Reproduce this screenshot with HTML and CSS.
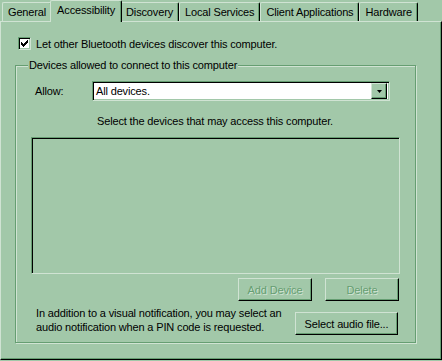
FILE: index.html
```html
<!DOCTYPE html>
<html lang="en">
<head>
  <meta charset="UTF-8" />
  <title>Bluetooth Settings</title>
  <link rel="stylesheet" href="styles.css">
</head>
<body>
  <div class="tabs">
    <div class="tab">General</div>
    <div class="tab active">Accessibility</div>
    <div class="tab">Discovery</div>
    <div class="tab">Local Services</div>
    <div class="tab">Client Applications</div>
    <div class="tab">Hardware</div>
  </div>

  <div class="panel">
    <label class="check-row">
      <span class="checkbox">
        <svg width="7" height="7" viewBox="0 0 7 7"><path d="M0 2h1v1h1v1h1v-1h1v-1h1v-1h1v-1h1v3h-1v1h-1v1h-1v1h-1v1h-1v-1h-1v-1h-1v-1h-1z" fill="#000"/></svg>
      </span>
      Let other Bluetooth devices discover this computer.
    </label>

    <fieldset class="group">
      <legend>Devices allowed to connect to this computer</legend>

      <div class="allow-row">
        <span class="allow-label">Allow:</span>
        <div class="combo">
          <span class="combo-value">All devices.</span>
          <span class="combo-btn">
            <svg width="5" height="3" viewBox="0 0 5 3"><path d="M0 0h5l-2.5 3z" fill="#000"/></svg>
          </span>
        </div>
      </div>

      <p class="hint">Select the devices that may access this computer.</p>

      <div class="device-list"></div>

      <div class="list-actions">
        <button class="btn" disabled>Add Device</button>
        <button class="btn" disabled>Delete</button>
      </div>

      <div class="audio-row">
        <p class="audio-text">In addition to a visual notification, you may select an<br>audio notification when a PIN code is requested.</p>
        <button class="btn btn-audio">Select audio file...</button>
      </div>
    </fieldset>
  </div>
</body>
</html>
```

FILE: styles.css
```css
* { box-sizing: border-box; }

body {
  margin: 0;
  width: 442px;
  height: 361px;
  overflow: hidden;
  background: #a2c8a9;
  color: #000;
  font-family: 'Liberation Sans', Arial, sans-serif;
  font-size: 11px;
  letter-spacing: -0.15px;
}

/* Tab strip */
.tabs {
  display: flex;
  align-items: flex-end;
  height: 21px;
  padding-left: 2px;
}

.tab {
  height: 19px;
  line-height: 18px;
  padding: 0 5px;
  background: #a2c8a9;
  border-top: 1px solid #d0e3d3;
  border-left: 1px solid #d0e3d3;
  border-right: 1px solid #000;
  border-radius: 2px 2px 0 0;
  box-shadow: inset -1px 0 0 #669e72;
  white-space: nowrap;
}

.tab.active {
  position: relative;
  z-index: 1;
  height: 22px;
  line-height: 18px;
  margin: 0 -2px -1px -2px;
  padding: 0 6px;
}

/* Page panel */
.panel {
  height: 339px;
  padding-top: 15px;
  border: 1px solid;
  border-color: #d0e3d3 #000 #000 #d0e3d3;
  box-shadow: inset -1px -1px 0 #669e72;
}

.check-row {
  display: flex;
  align-items: center;
  gap: 5px;
  height: 13px;
  margin-left: 17px;
}

.checkbox {
  display: flex;
  align-items: center;
  justify-content: center;
  width: 13px;
  height: 13px;
  background: #fff;
  border: 1px solid;
  border-color: #669e72 #d0e3d3 #d0e3d3 #669e72;
  box-shadow: inset 1px 1px 0 #000, inset -1px -1px 0 #a2c8a9;
}

/* Group box */
.group {
  min-width: 0;
  margin: 9px 25px 0 14px;
  padding: 0 0 7px;
  border: 1px solid #669e72;
  box-shadow: inset 1px 1px 0 #d0e3d3, 1px 1px 0 #d0e3d3;
}

.group legend {
  margin-left: 12px;
  padding: 0 1px;
  line-height: 13px;
  background: #a2c8a9;
}

.allow-row {
  display: flex;
  align-items: center;
  margin: 9px 0 0 19px;
}

.allow-label { width: 57px; }

.combo {
  display: flex;
  align-items: center;
  width: 298px;
  height: 20px;
  padding: 2px;
  background: #fff;
  border: 1px solid;
  border-color: #669e72 #d0e3d3 #d0e3d3 #669e72;
  box-shadow: inset 1px 1px 0 #000, inset -1px -1px 0 #a2c8a9;
}

.combo-value {
  flex: 1;
  padding-left: 1px;
}

.combo-btn {
  display: flex;
  align-items: center;
  justify-content: center;
  width: 16px;
  height: 16px;
  background: #a2c8a9;
  border: 1px solid;
  border-color: #d0e3d3 #000 #000 #d0e3d3;
  box-shadow: inset -1px -1px 0 #669e72;
}

.hint {
  margin: 14px 0 0 81px;
  line-height: 13px;
}

.device-list {
  width: 369px;
  height: 137px;
  margin: 9px 0 0 15px;
  border: 1px solid;
  border-color: #669e72 #d0e3d3 #d0e3d3 #669e72;
  box-shadow: inset 1px 1px 0 #000, inset -1px -1px 0 #a2c8a9;
}

.list-actions {
  display: flex;
  justify-content: flex-end;
  gap: 13px;
  width: 368px;
  margin: 4px 0 0 15px;
}

.btn {
  height: 23px;
  padding: 0;
  font: inherit;
  letter-spacing: inherit;
  color: #000;
  background: #a2c8a9;
  border: 1px solid;
  border-color: #d0e3d3 #000 #000 #d0e3d3;
  box-shadow: inset -1px -1px 0 #669e72;
}

.list-actions .btn { width: 74px; }

.btn:disabled {
  color: #669e72;
  text-shadow: 1px 1px 0 #d0e3d3;
}

.audio-row {
  display: flex;
  align-items: flex-start;
  justify-content: space-between;
  margin: 5px 17px 0 20px;
}

.audio-text {
  margin: 0;
  line-height: 14px;
}

.btn-audio {
  width: 103px;
  margin-top: 6px;
}
```
